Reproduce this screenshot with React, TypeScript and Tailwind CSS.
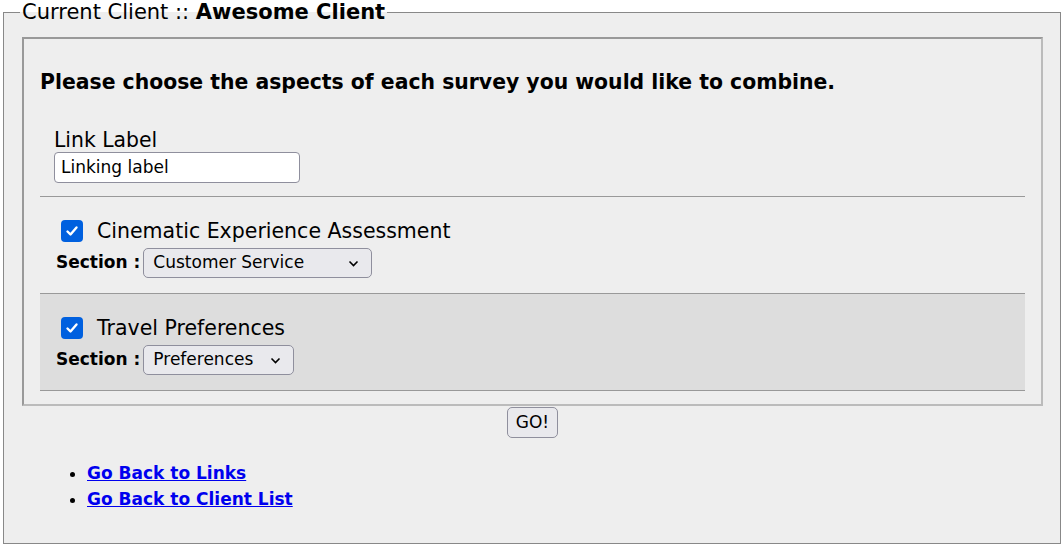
import React from "react";

function Check() {
  return (
    <span className="inline-flex h-[22px] w-[22px] items-center justify-center rounded-[4px] bg-[#0060df]">
      <svg width="14" height="14" viewBox="0 0 14 14" fill="none">
        <path d="M2.5 7.5 L5.5 10.5 L11.5 3.5" stroke="white" strokeWidth="2.4" strokeLinecap="round" strokeLinejoin="round" />
      </svg>
    </span>
  );
}

function Select({ value, width }: { value: string; width: string }) {
  return (
    <div className={`flex h-[30px] items-center justify-between rounded-[5px] border border-[#8f8f9d] bg-[#e9e9ed] pl-[9px] pr-[12px] text-[17px] text-black ${width}`}>
      <span>{value}</span>
      <svg width="11" height="7" viewBox="0 0 11 7" fill="none">
        <path d="M1.5 1.5 L5.5 5.5 L9.5 1.5" stroke="black" strokeWidth="1.6" />
      </svg>
    </div>
  );
}

export default function App() {
  return (
    <div className="min-h-[545px] bg-white text-black" style={{ fontFamily: "'DejaVu Sans', Verdana, sans-serif" }}>
      <fieldset className="ml-[3px] mr-[2px] h-[544px] border border-[#888] bg-[#eee] pl-[18px] pr-[17px] pb-0 pt-0">
        <legend className="-ml-[2px] px-[2px] text-[21px] leading-[24px]">
          Current Client :: <b>Awesome Client</b>
        </legend>
        <div className="mt-[13px] border-2 border-t-[#999] border-l-[#999] border-r-[#bbb] border-b-[#bbb] bg-[#eee] px-[16px] pb-[13px] pt-[30px]">
          <h2 className="text-[20.4px] font-bold leading-[26px]">Please choose the aspects of each survey you would like to combine.</h2>
          <div className="px-[14px] pb-[13px] pt-[33px]">
            <div className="text-[20.4px] leading-[24px]">Link Label</div>
            <div className="flex h-[31px] w-[246px] items-center rounded-[4px] border border-[#8f8f9d] bg-white px-[6px] text-[17px]">Linking label</div>
          </div>
          <div className="border-t border-[#999] px-[16px] pb-[15px] pt-[21px]">
            <div className="flex items-center gap-[14px] pl-[5px]">
              <Check />
              <span className="text-[20.5px] leading-[26px]">Cinematic Experience Assessment</span>
            </div>
            <div className="mt-[4px] flex items-center gap-[3px]">
              <b className="text-[17px]">Section :</b>
              <Select value="Customer Service" width="w-[229px]" />
            </div>
          </div>
          <div className="border-y border-[#999] bg-[#ddd] px-[16px] pb-[15px] pt-[21px]">
            <div className="flex items-center gap-[14px] pl-[5px]">
              <Check />
              <span className="text-[20.5px] leading-[26px]">Travel Preferences</span>
            </div>
            <div className="mt-[4px] flex items-center gap-[3px]">
              <b className="text-[17px]">Section :</b>
              <Select value="Preferences" width="w-[151px]" />
            </div>
          </div>
        </div>
        <div className="flex justify-center pt-[1px]">
          <button className="h-[31px] rounded-[5px] border border-[#8f8f9d] bg-[#e9e9ed] px-[8px] text-[17px]">GO!</button>
        </div>
        <ul className="mt-[22px] list-disc pl-[65px] text-[17px] font-bold leading-[26px]">
          <li><a href="#" className="text-[#0000ee] underline">Go Back to Links</a></li>
          <li><a href="#" className="text-[#0000ee] underline">Go Back to Client List</a></li>
        </ul>
      </fieldset>
    </div>
  );
}
